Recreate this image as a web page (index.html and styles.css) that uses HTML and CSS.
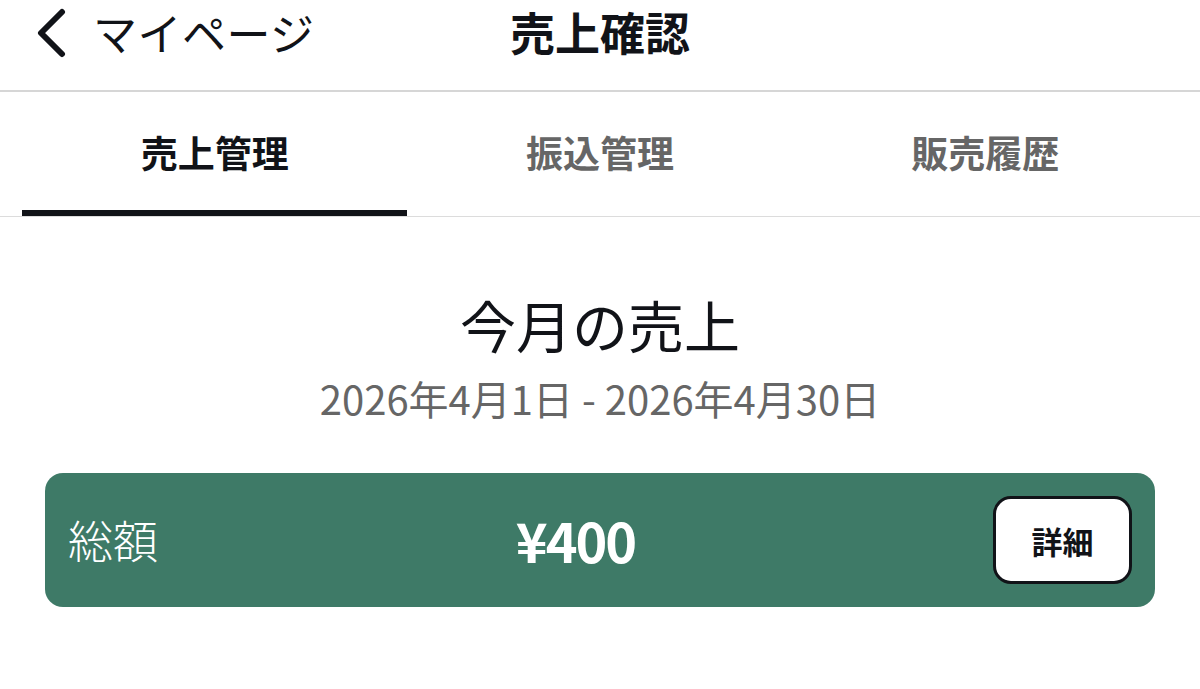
FILE: index.html
```html
<!DOCTYPE html>
<html lang="ja">
<head>
<meta charset="utf-8">
<title>売上確認</title>
<link rel="stylesheet" href="styles.css">
</head>
<body>
<header class="header">
  <a class="back" href="#">
    <svg class="chev" width="34" height="52" viewBox="0 0 34 52" aria-hidden="true">
      <polyline points="27,6 6,27 27,48" fill="none" stroke="#111318" stroke-width="6" stroke-linecap="round" stroke-linejoin="round"/>
    </svg>
    <span class="back-label">マイページ</span>
  </a>
  <h1 class="title">売上確認</h1>
  <div class="spacer"></div>
</header>
<nav class="tabs">
  <div class="tab active">売上管理</div>
  <div class="tab">振込管理</div>
  <div class="tab">販売履歴</div>
</nav>
<main class="content">
  <h2 class="month">今月の売上</h2>
  <p class="range">2026年4月1日 - 2026年4月30日</p>
  <section class="card">
    <span class="card-label">総額</span>
    <span class="card-amount">¥400</span>
    <button class="detail">詳細</button>
  </section>
</main>
</body>
</html>
```
FILE: styles.css
```css
* { box-sizing: border-box; }
html, body {
  margin: 0;
  padding: 0;
  background: #ffffff;
  color: #111318;
  font-family: "Noto Sans CJK JP", "Noto Sans", sans-serif;
}
.header {
  display: grid;
  grid-template-columns: 1fr auto 1fr;
  align-items: center;
  padding: 0 0 26px 0;
  border-bottom: 2px solid #d6d6d6;
}
.back {
  display: flex;
  align-items: center;
  gap: 24px;
  padding-left: 35px;
  text-decoration: none;
  color: #111318;
}
.chev { display: block; }
.back-label {
  font-size: 44px;
  font-weight: 400;
  line-height: 64px;
  letter-spacing: 0.5px;
}
.title {
  margin: 0;
  font-size: 45px;
  font-weight: 700;
  line-height: 64px;
}
.tabs {
  display: flex;
  padding: 0 22px;
  border-bottom: 1px solid #dcdcdc;
}
.tab {
  flex: 1;
  height: 124px;
  display: flex;
  align-items: center;
  justify-content: center;
  font-size: 37px;
  font-weight: 700;
  color: #666666;
  border-bottom: 6px solid transparent;
  padding-top: 2px;
}
.tab.active {
  color: #111318;
  border-bottom-color: #111318;
}
.content {
  padding: 74px 45px 0;
  text-align: center;
}
.month {
  margin: 0;
  font-size: 56px;
  font-weight: 400;
  line-height: 66px;
}
.range {
  margin: 18px 0 0;
  font-size: 40px;
  line-height: 46px;
  color: #666666;
}
.card {
  margin-top: 52px;
  height: 134px;
  border-radius: 18px;
  background: #3e7a67;
  display: flex;
  align-items: center;
  justify-content: space-between;
  padding: 0 23px;
  color: #ffffff;
}
.card-label {
  font-size: 45px;
  font-weight: 300;
  line-height: 56px;
}
.card-amount {
  font-size: 54px;
  font-weight: 700;
  line-height: 56px;
  letter-spacing: -2px;
}
.detail {
  width: 139px;
  height: 88px;
  border: 3px solid #111318;
  border-radius: 18px;
  background: #ffffff;
  color: #111318;
  font-family: "Noto Sans CJK JP", sans-serif;
  font-size: 31px;
  font-weight: 700;
  padding: 0;
}
```
